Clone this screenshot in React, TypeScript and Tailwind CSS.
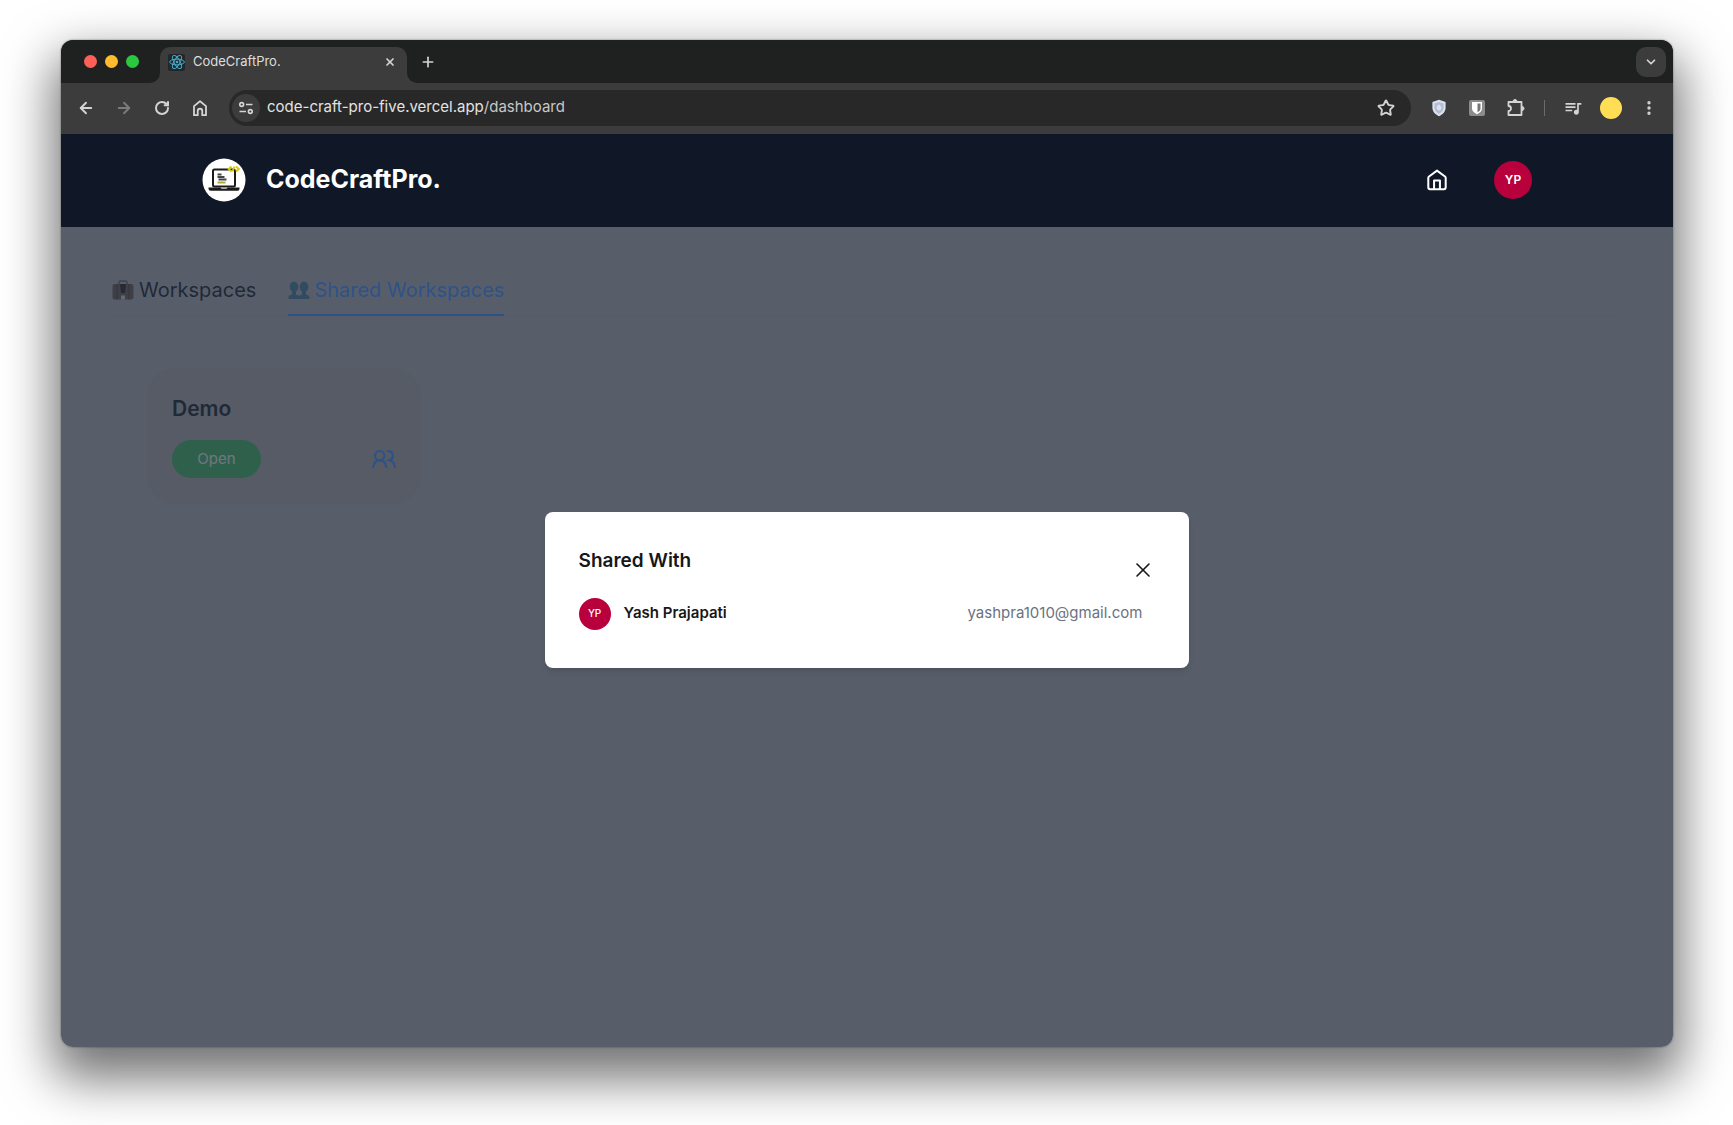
import type { ReactNode } from 'react';
import { ArrowLeft, ArrowRight, ChevronDown, EllipsisVertical, Plus, RotateCw, Star, X } from 'lucide-react';
import { MdQueueMusic } from 'react-icons/md';

interface Member {
  name: string;
  initials: string;
  email: string;
}

const members: Member[] = [{ name: 'Yash Prajapati', initials: 'YP', email: 'yashpra1010@gmail.com' }];

function ReactMark() {
  return (
    <span className="grid size-[17px] shrink-0 place-items-center rounded-xs bg-[#20282c]">
      <svg viewBox="0 0 24 24" className="size-4" fill="none" stroke="#4aa9c6" strokeWidth="1.5">
        <ellipse cx="12" cy="12" rx="11" ry="4.3" />
        <ellipse cx="12" cy="12" rx="11" ry="4.3" transform="rotate(60 12 12)" />
        <ellipse cx="12" cy="12" rx="11" ry="4.3" transform="rotate(120 12 12)" />
        <circle cx="12" cy="12" r="2" fill="#4aa9c6" stroke="none" />
      </svg>
    </span>
  );
}

function HouseIcon({ className }: { className: string }) {
  return (
    <svg viewBox="0 0 24 24" className={className} fill="none" stroke="currentColor" strokeWidth="2.2" strokeLinejoin="round">
      <path d="M2.5 9.800c0-.6.300-1.200.8-1.600L12 1.800l8.700 6.400c.5.4.8 1 .8 1.600V20a2 2 0 0 1-2 2h-15a2 2 0 0 1-2-2z" />
      <path d="M8.8 22v-9.500h6.400V22" />
    </svg>
  );
}

function ToolbarHome() {
  return (
    <svg viewBox="0 0 24 24" className="size-[18px]" fill="none" stroke="currentColor" strokeWidth="2.4" strokeLinejoin="round">
      <path d="M4 21.5v-12L12 3l8 6.500v12h-5v-5.500a3 3 0 0 0-6 0v5.500z" />
    </svg>
  );
}

function SiteSettingsIcon() {
  return (
    <svg viewBox="0 0 16 16" className="size-4" fill="none" stroke="#d4d6d8" strokeWidth="1.6">
      <circle cx="3.7" cy="4.5" r="1.9" />
      <path d="M8 4.500h6.500M1.500 11.500H8" />
      <circle cx="12.3" cy="11.5" r="1.9" />
    </svg>
  );
}

function ShieldIcon() {
  return (
    <svg viewBox="0 0 16 18" className="h-[18px] w-4">
      <path d="M8 .8 14.600 3v5.500c0 4-2.600 6.800-6.600 8.700C4 15.300 1.400 12.500 1.400 8.500V3z" fill="#dbe2ee" />
      <path d="M8 3 12.600 4.600v4c0 2.800-1.800 4.900-4.600 6.300-2.800-1.400-4.600-3.500-4.600-6.300v-4z" fill="#b4bfd3" />
      <path d="M8 5.200c1.500 1.200 2.300 2.400 2.300 3.800A2.300 2.300 0 0 1 8 11.400 2.300 2.300 0 0 1 5.700 9C5.700 7.600 6.500 6.400 8 5.200z" fill="#dbe2ee" />
    </svg>
  );
}

function VaultIcon() {
  return (
    <svg viewBox="0 0 18 18" className="size-[18px]">
      <rect x="1" y="1" width="16" height="16" rx="2" fill="#8b8b8b" />
      <path d="M4 3h10v6.500c0 2.600-2 4.300-5 5.800-3-1.500-5-3.200-5-5.800z" fill="#fff" />
      <path d="M9.500 4.600h3v4.800c0 1.600-1.100 2.800-3 4z" fill="#777" />
    </svg>
  );
}

function PuzzleIcon() {
  return (
    <svg viewBox="0 0 20 20" className="size-5" fill="none" stroke="currentColor" strokeWidth="1.8" strokeLinejoin="round">
      <path d="M2.500 4h13v13h-13v-4a2.500 2.500 0 0 0 0-5z" />
      <path d="M7 3.500a2 2 0 0 1 4 0zM16 8.500a2 2 0 0 1 0 4z" fill="currentColor" strokeWidth="1" />
    </svg>
  );
}

function UsersIcon() {
  return (
    <svg viewBox="0 0 24 18" className="h-[18px] w-6" fill="none" stroke="currentColor" strokeWidth="2.1" strokeLinecap="round">
      <circle cx="7.7" cy="5.7" r="4.7" />
      <path d="M1.1 17c.6-3.900 3-6.600 6.600-6.600s6 2.700 6.600 6.600" />
      <path d="M16 1.100a4.700 4.700 0 0 1 1.500 9.200c3 .7 4.900 3.200 5.400 6.700" />
    </svg>
  );
}

function LaptopLogo() {
  return (
    <svg viewBox="0 0 44 44" className="size-11" aria-hidden="true">
      <circle cx="22" cy="22" r="21.5" fill="#fff" />
      <rect x="11" y="11.5" width="22" height="17" rx="1.5" fill="#fff" stroke="#1b1b1b" strokeWidth="2" />
      <path d="M6.500 29.500h31v1.200c0 1.200-1 2.100-2.200 2.100H8.700a2.200 2.200 0 0 1-2.200-2.100z" fill="#1b1b1b" />
      <path d="M18.500 29.500h7l-1 1.200h-5z" fill="#ddd" />
      <path d="M15.500 16.500h4M15.500 19h7M16.500 21.500h8" stroke="#444" strokeWidth="1.8" />
      <path d="M15.500 24.500h8" stroke="#b8a733" strokeWidth="2.2" />
      <path d="m29.500 8.500-2.800 2.500 2.800 2.500M34 8.500l2.800 2.500-2.800 2.500M32.500 8.500l-2 5" fill="none" stroke="#d8c814" strokeWidth="2" />
    </svg>
  );
}

function BriefcaseGlyph() {
  return (
    <svg viewBox="0 0 22 20" className="h-5 w-[22px]" aria-hidden="true">
      <path d="M7 5V2.500C7 1.700 7.700 1 8.500 1h5c.8 0 1.500.7 1.500 1.500V5" fill="none" stroke="#6b6b6b" strokeWidth="1.5" />
      <rect x="0.5" y="4" width="21" height="15.5" rx="2" fill="#6b6060" />
      <path d="M5 4v15.500M17 4v15.500" stroke="#544644" />
      <path d="M8 4h6l-1 9H9z" fill="#3a2a28" />
      <path d="M9 15.500h4v4H9z" fill="#c9c9c9" />
    </svg>
  );
}

function PeopleGlyph() {
  return (
    <svg viewBox="0 0 22 20" className="h-5 w-[22px]" fill="#4c7d9e" aria-hidden="true">
      <ellipse cx="6" cy="6.8" rx="4.3" ry="5.3" />
      <ellipse cx="16" cy="6.8" rx="4.3" ry="5.3" />
      <path d="M4 11h4v3.500l2.500 1c.7.300 1 1 1 1.700V19H.5v-1.800c0-.7.300-1.400 1-1.700L4 14.500z" />
      <path d="M14 11h4v3.500l2.500 1c.7.300 1 1 1 1.700V19h-11v-1.800c0-.7.300-1.400 1-1.700l2.500-1z" />
    </svg>
  );
}

function IconButton({ label, className = '', children }: { label: string; className?: string; children?: ReactNode }) {
  return (
    <button type="button" aria-label={label} className={`grid shrink-0 place-items-center ${className}`}>
      {children}
    </button>
  );
}

/** Tab strip and address bar */
function BrowserChrome() {
  return (
    <div className="bg-[#3c3c3c] text-[#d4d4d4]">
      <div className="flex h-[43px] items-end bg-[#1f2120] pr-[7px] pl-[23px]">
        <div className="flex h-full w-[66px] shrink-0 items-center gap-2">
          <span className="size-[13px] rounded-full bg-[#ff5f57]" />
          <span className="size-[13px] rounded-full bg-[#febc2e]" />
          <span className="size-[13px] rounded-full bg-[#28c840]" />
        </div>
        {/* flared corners on both sides of the active tab */}
        <span className="size-[10px] bg-[#3c3c3c]">
          <span className="block size-full rounded-br-[10px] bg-[#1f2120]" />
        </span>
        <div className="flex h-9 w-[247px] items-center gap-2 rounded-t-[10px] bg-[#3c3c3c] pr-[9px] pb-[6px] pl-2">
          <ReactMark />
          <span className="flex-1 text-[13px] text-[#dedede]">CodeCraftPro.</span>
          <IconButton label="Close tab" className="size-4">
            <X size={12} strokeWidth={3.5} />
          </IconButton>
        </div>
        <span className="size-[10px] bg-[#3c3c3c]">
          <span className="block size-full rounded-bl-[10px] bg-[#1f2120]" />
        </span>
        <IconButton label="New tab" className="h-full w-[22px]">
          <Plus size={16} strokeWidth={2.5} />
        </IconButton>
        <IconButton label="Search tabs" className="mb-[6px] ml-auto size-[30px] rounded-[10px] bg-[#3c3c3c]">
          <ChevronDown size={14} strokeWidth={3} />
        </IconButton>
      </div>

      <div className="flex h-[51px] items-center pr-[15px] pb-[2px] pl-4">
        <div className="flex items-center gap-5">
          <IconButton label="Back" className="w-[18px]">
            <ArrowLeft size={18} strokeWidth={2.5} />
          </IconButton>
          <IconButton label="Forward" className="w-[18px] text-[#7b7b7b]">
            <ArrowRight size={18} strokeWidth={2.5} />
          </IconButton>
          <IconButton label="Reload" className="w-[18px]">
            <RotateCw size={16} strokeWidth={3} />
          </IconButton>
          <IconButton label="Home" className="w-[18px]">
            <ToolbarHome />
          </IconButton>
        </div>
        <div className="ml-5 flex h-9 flex-1 items-center rounded-full bg-[#282828] pr-4 pl-[3px]">
          <IconButton label="Site information" className="size-7 rounded-full bg-[#3c3c3c]">
            <SiteSettingsIcon />
          </IconButton>
          <div className="ml-[7px] flex-1 text-[15px] text-[#e3e3e3]">
            code-craft-pro-five.vercel.app<span className="text-[#c7c7c7]">/dashboard</span>
          </div>
          <IconButton label="Bookmark">
            <Star size={18} strokeWidth={2.5} />
          </IconButton>
        </div>
        <div className="ml-[19px] flex items-center">
          <IconButton label="Privacy extension" className="w-[18px]">
            <ShieldIcon />
          </IconButton>
          <IconButton label="Password manager" className="ml-5 w-[18px]">
            <VaultIcon />
          </IconButton>
          <IconButton label="Extensions" className="ml-5 w-5">
            <PuzzleIcon />
          </IconButton>
          <span className="ml-[18px] h-4 w-px bg-[#6b6b6b]" />
          <IconButton label="Media" className="ml-[18px] w-5">
            <MdQueueMusic size={20} />
          </IconButton>
          <IconButton label="Profile" className="ml-[17px] size-[22px] rounded-full bg-[#ffdd55]" />
          <IconButton label="Menu" className="ml-[18px] w-[18px]">
            <EllipsisVertical size={18} strokeWidth={2.5} />
          </IconButton>
        </div>
      </div>
    </div>
  );
}

function Header() {
  return (
    <header className="relative z-20 flex h-[93px] items-center justify-between bg-[#101828] px-[141px] pb-px">
      <a href="#home" className="flex items-center gap-5 text-white">
        <LaptopLogo />
        <span className="text-[25px] font-bold">CodeCraftPro.</span>
      </a>
      <div className="flex items-center gap-[46px] text-white">
        <IconButton label="Dashboard">
          <HouseIcon className="size-[22px]" />
        </IconButton>
        <IconButton label="Account" className="size-[38px] rounded-full bg-[#b8003c] text-xs font-semibold">
          YP
        </IconButton>
      </div>
    </header>
  );
}

function WorkspaceCard({ title }: { title: string }) {
  return (
    <div className="w-[274px] rounded-[28px] bg-[#a7a6ac] px-[25px] py-[26px]">
      <h2 className="text-[21px] leading-[30px] font-semibold text-gray-800">{title}</h2>
      <div className="mt-4 flex items-center justify-between">
        <button type="button" className="h-[38px] w-[89px] rounded-full bg-[#45b26c] text-[15px] text-gray-200">
          Open
        </button>
        <IconButton label="Shared with" className="text-[#4390ff]">
          <UsersIcon />
        </IconButton>
      </div>
    </div>
  );
}

function SharedWithDialog() {
  return (
    <div className="absolute inset-0 z-10 flex items-center justify-center bg-[#1f2937]/60 pb-[2px]">
      <div role="dialog" aria-label="Shared With" className="w-[40%] rounded-lg bg-white px-[34px] pt-[34px] pb-[38px] shadow-md">
        <div className="flex items-start justify-between">
          <h3 className="text-[19px] leading-[30px] font-semibold text-neutral-900">Shared With</h3>
          <IconButton label="Close" className="mt-3 size-6 text-neutral-900">
            <X size={24} strokeWidth={1.6} />
          </IconButton>
        </div>
        <ul className="mt-4">
          {members.map((member) => (
            <li key={member.email} className="flex items-center pr-[13px]">
              <span className="grid size-8 place-items-center rounded-full bg-[#b8003c] text-[10px] font-medium text-white">
                {member.initials}
              </span>
              <span className="ml-[13px] flex-1 text-[15px] font-semibold text-neutral-900">{member.name}</span>
              <span className="text-[15px] text-gray-500">{member.email}</span>
            </li>
          ))}
        </ul>
      </div>
    </div>
  );
}

export default function App() {
  return (
    <div className="flex min-h-screen flex-col bg-white pt-10 pr-[60px] pb-[78px] pl-[61px] font-['Inter',sans-serif]">
      <div className="flex flex-1 flex-col overflow-hidden rounded-xl shadow-[0_24px_50px_8px_rgba(0,0,0,0.55),0_0_2px_rgba(0,0,0,0.5)]">
        <BrowserChrome />
        <div className="relative flex flex-1 flex-col bg-[#adadb4]">
          <Header />
          <main className="flex-1 px-[51px] pt-[47px]">
            <nav className="flex gap-8 border-b border-[#a6a6af] text-xl leading-8">
              <button type="button" className="flex items-center gap-[5px] pb-[10px] text-gray-800">
                <BriefcaseGlyph />
                Workspaces
              </button>
              <button type="button" className="flex items-center gap-1 border-b-2 border-[#4390ff] pb-2 text-[#4390ff]">
                <PeopleGlyph />
                Shared Workspaces
              </button>
            </nav>
            <section className="px-[35px] pt-[51px]">
              <WorkspaceCard title="Demo" />
            </section>
          </main>
          <SharedWithDialog />
        </div>
      </div>
    </div>
  );
}
